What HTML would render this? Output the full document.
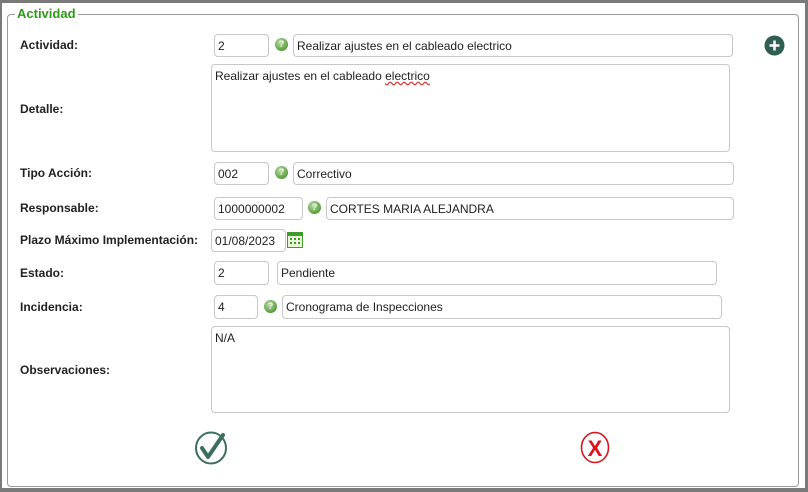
<!DOCTYPE html>
<html><head><meta charset="utf-8"><style>
*{box-sizing:border-box}
body{margin:0;width:808px;height:492px;background:#fff;position:relative;overflow:hidden;font-family:"Liberation Sans",sans-serif;font-size:12px;color:#222}
.outer{position:absolute;left:0;top:0;width:808px;height:492px;border-top:3px solid #7a7a7a;border-left:2px solid #7a7a7a;border-right:3px solid #7a7a7a;border-bottom:4px solid #7a7a7a}
.fs{position:absolute;left:7px;top:14px;width:792px;height:473px;border:1px solid #9a9a9a;border-radius:4px}
.legend{position:absolute;left:15px;top:6px;background:#fff;padding:0 2px;color:#2e9a1a;font-weight:bold;font-size:13px}
.lbl{position:absolute;left:20px;font-weight:bold;font-size:12px;transform:translateY(-50%)}
.in{position:absolute;border:1px solid #c8c8c8;border-radius:4px;padding:1px 3px 0;line-height:21px;font-size:12px;color:#222;white-space:nowrap;overflow:hidden}
.ta{position:absolute;border:1px solid #c8c8c8;border-radius:4px;padding:4px 3px;font-size:12px}
.q{position:absolute;width:13px;height:13px;border-radius:50%;background:radial-gradient(circle at 40% 35%,#b8dca0,#5a9e3e 70%,#3f7d2a);color:#fff;font-size:9px;font-weight:bold;text-align:center;line-height:13px}
</style></head><body>
<div class="outer"></div>
<div class="fs"></div>
<div class="legend">Actividad</div>

<div class="lbl" style="top:45px">Actividad:</div>
<div class="in" style="left:214px;top:34px;width:55px;height:23px">2</div>
<div class="q" style="left:275px;top:38px">?</div>
<div class="in" style="left:293px;top:34px;width:440px;height:23px">Realizar ajustes en el cableado electrico</div>
<svg style="position:absolute;left:764px;top:35px" width="21" height="21"><circle cx="10.5" cy="10.5" r="10" fill="#2f5f52"/><path d="M10.5 5.5v10M5.5 10.5h10" stroke="#fff" stroke-width="2.5"/></svg>

<div class="lbl" style="top:109px">Detalle:</div>
<div class="ta" style="left:211px;top:64px;width:519px;height:88px">Realizar ajustes en el cableado <span style="text-decoration:underline wavy #d33">electrico</span></div>

<div class="lbl" style="top:173px">Tipo Acción:</div>
<div class="in" style="left:214px;top:162px;width:55px;height:23px">002</div>
<div class="q" style="left:275px;top:166px">?</div>
<div class="in" style="left:293px;top:162px;width:441px;height:23px">Correctivo</div>

<div class="lbl" style="top:208px">Responsable:</div>
<div class="in" style="left:214px;top:197px;width:89px;height:23px">1000000002</div>
<div class="q" style="left:308px;top:201px">?</div>
<div class="in" style="left:326px;top:197px;width:408px;height:23px">CORTES MARIA ALEJANDRA</div>

<div class="lbl" style="top:240px">Plazo Máximo Implementación:</div>
<div class="in" style="left:211px;top:229px;width:75px;height:23px">01/08/2023</div>
<svg style="position:absolute;left:287px;top:232px" width="16" height="16"><rect x="0.5" y="0.5" width="15" height="15" fill="#e8f5d8" stroke="#3f9a2a"/><rect x="1" y="1" width="14" height="3" fill="#3f9a2a"/><g fill="#3f9a2a"><rect x="3" y="6" width="2" height="2"/><rect x="7" y="6" width="2" height="2"/><rect x="11" y="6" width="2" height="2"/><rect x="3" y="10" width="2" height="2"/><rect x="7" y="10" width="2" height="2"/><rect x="11" y="10" width="2" height="2"/></g></svg>

<div class="lbl" style="top:273px">Estado:</div>
<div class="in" style="left:214px;top:261px;width:55px;height:24px">2</div>
<div class="in" style="left:277px;top:261px;width:440px;height:24px">Pendiente</div>

<div class="lbl" style="top:307px">Incidencia:</div>
<div class="in" style="left:214px;top:295px;width:44px;height:24px">4</div>
<div class="q" style="left:264px;top:300px">?</div>
<div class="in" style="left:282px;top:295px;width:440px;height:24px">Cronograma de Inspecciones</div>

<div class="lbl" style="top:370px">Observaciones:</div>
<div class="ta" style="left:211px;top:326px;width:519px;height:87px">N/A</div>

<svg style="position:absolute;left:193px;top:430px" width="38" height="36"><ellipse cx="18" cy="18" rx="15" ry="15.5" fill="none" stroke="#3c6e5e" stroke-width="2"/><path d="M9 18l6 9 L30 5" fill="none" stroke="#3c6e5e" stroke-width="4" stroke-linecap="round" stroke-linejoin="round"/></svg>
<svg style="position:absolute;left:578px;top:431px" width="34" height="34"><ellipse cx="17" cy="16.5" rx="13.5" ry="15" fill="none" stroke="#d9141e" stroke-width="1.6"/><text x="17" y="25" text-anchor="middle" font-family="Liberation Sans" font-weight="bold" font-size="22" fill="#e0101a">X</text></svg>
</body></html>
